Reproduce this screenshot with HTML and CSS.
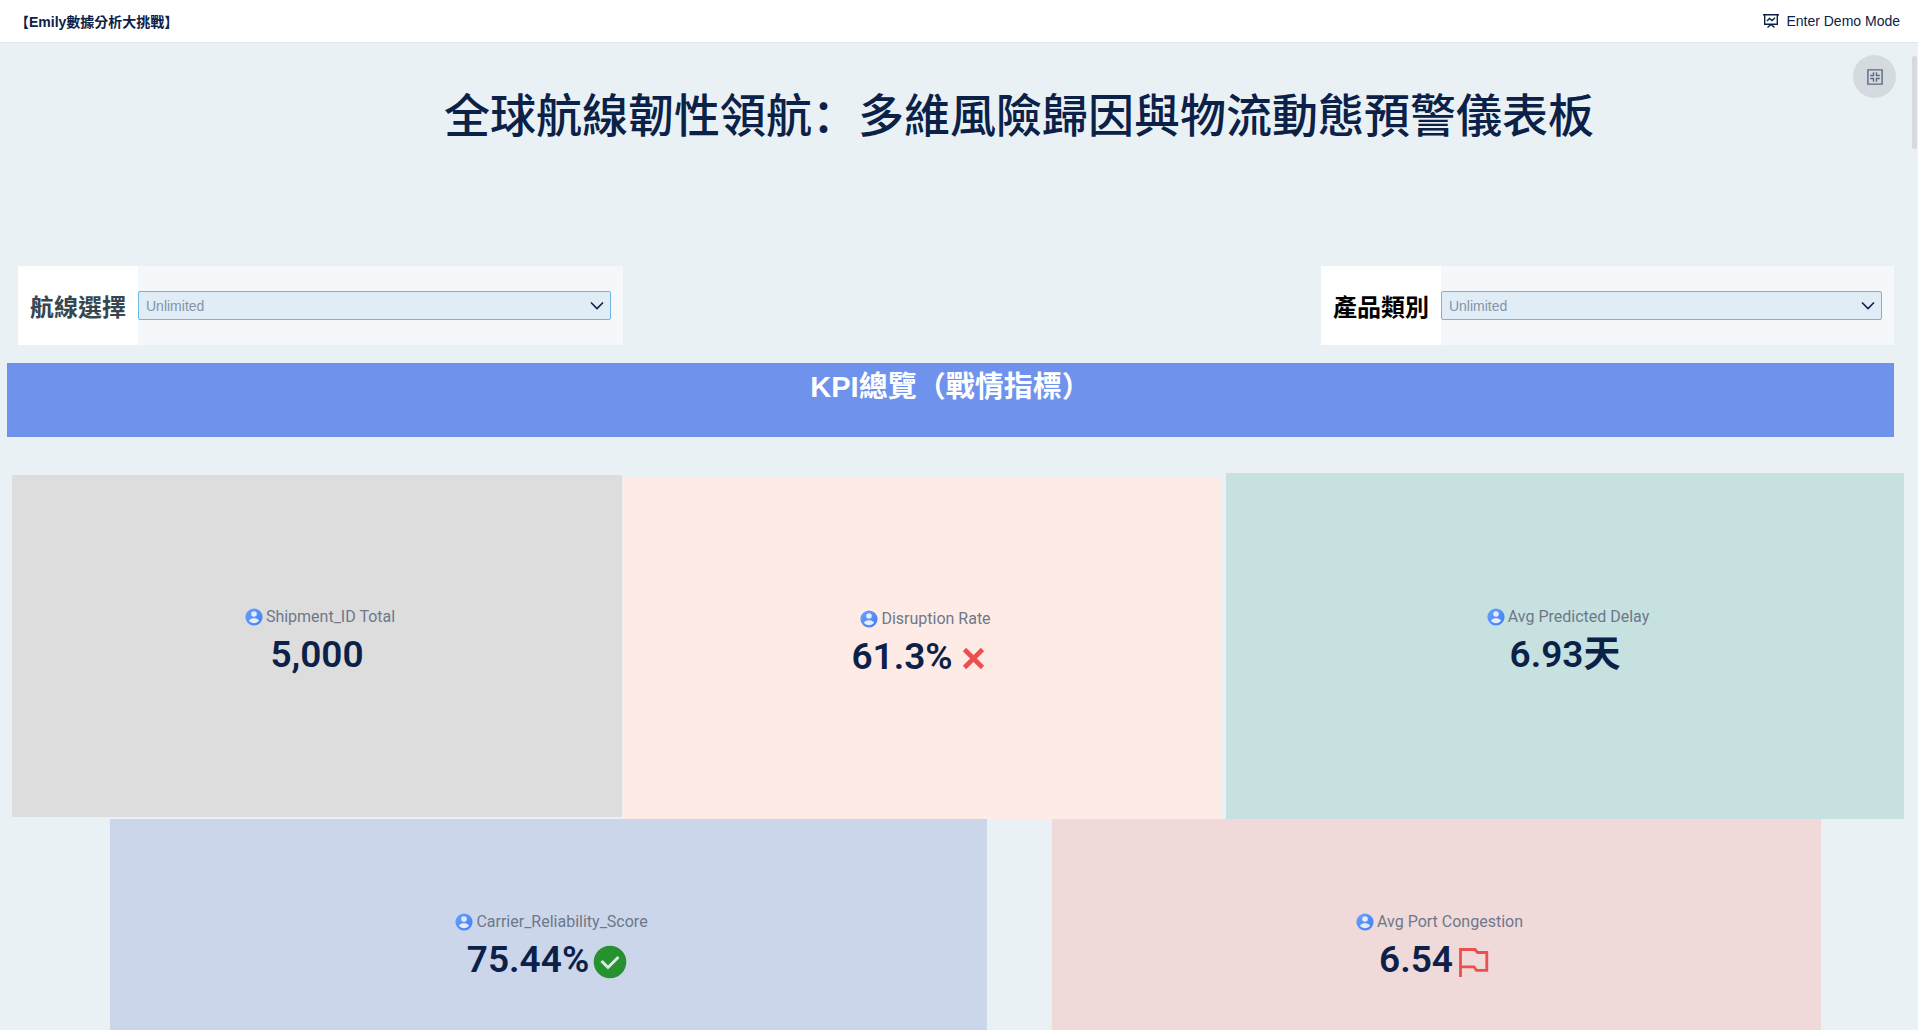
FILE: index.html
```html
<!DOCTYPE html>
<html lang="zh-Hant">

<head>
  <meta charset="utf-8">
  <title>【Emily數據分析大挑戰】</title>
  <link rel="stylesheet" href="styles.css">
</head>

<body>
  <svg class="defs" aria-hidden="true">
    <linearGradient id="userFill" x1="0" y1="0" x2="1" y2="1">
      <stop offset="0" stop-color="#6ba3fb" />
      <stop offset="1" stop-color="#3f7df5" />
    </linearGradient>
    <symbol id="user" viewBox="0 0 18 18">
      <circle cx="9" cy="9" r="8.6" fill="url(#userFill)" />
      <circle cx="9" cy="6" r="2.8" fill="#e4ecf8" />
      <path d="M3.9 12.4C5.2 10.8 7 10.2 9 10.2s3.8.6 5.1 2.2C12.9 14.2 11.1 15.2 9 15.2s-3.9-1-5.1-2.8z" fill="#e4ecf8" />
    </symbol>
    <symbol id="chevron" viewBox="0 0 14 9">
      <path d="M1 1.5l6 6 6-6" fill="none" stroke="#0c2148" stroke-width="1.6" />
    </symbol>
  </svg>

  <header class="topbar">
    <span class="page-name">【Emily數據分析大挑戰】</span>
    <button class="demo-btn">
      <svg width="18" height="16" viewBox="0 0 18 16" fill="none" stroke="#0c2148" stroke-width="1.4">
        <path d="M1 1.7h16M2.7 1.7v9.6h12.6V1.7M5 8l2.5-2.5 2.5 2L13 4.7M5.5 14.5L9 11.5l3.5 3" />
      </svg>
      Enter Demo Mode
    </button>
  </header>

  <main class="board">
    <button class="shrink-btn" aria-label="Exit full screen">
      <svg width="16" height="16" viewBox="0 0 16 16" fill="none" stroke="#5a6886" stroke-width="1.4">
        <path d="M.9.9h14.2v14.2H.9z" />
        <path d="M3.2 6.5h3.3V3.2M12.8 6.5H9.5V3.2M3.2 9.5h3.3v3.3M12.8 9.5H9.5v3.3" />
      </svg>
    </button>
    <div class="scroll-thumb"></div>

    <h1 lang="zh-Hans">全球航線韌性領航：多維風險歸因與物流動態預警儀表板</h1>

    <div class="filters">
      <div class="filter route">
        <label for="route">航線選擇</label>
        <div class="select-wrap">
          <select id="route">
            <option>Unlimited</option>
          </select>
          <svg class="arrow" width="14" height="9"><use href="#chevron" /></svg>
        </div>
      </div>
      <div class="filter product">
        <label for="product">產品類別</label>
        <div class="select-wrap">
          <select id="product">
            <option>Unlimited</option>
          </select>
          <svg class="arrow" width="14" height="9"><use href="#chevron" /></svg>
        </div>
      </div>
    </div>

    <h2>KPI總覽（戰情指標）</h2>

    <div class="kpi-row top">
      <section class="kpi shipment">
        <p class="name"><svg width="18" height="18"><use href="#user" /></svg>Shipment_ID Total</p>
        <p class="value">5,000</p>
      </section>
      <section class="kpi disruption">
        <p class="name"><svg width="18" height="18"><use href="#user" /></svg>Disruption Rate</p>
        <p class="value">61.3%
          <svg width="34" height="34" viewBox="0 0 34 34">
            <path d="M7.5 7.5l18 18M25.5 7.5l-18 18" stroke="#e9504f" stroke-width="4.6" />
          </svg>
        </p>
      </section>
      <section class="kpi delay">
        <p class="name"><svg width="18" height="18"><use href="#user" /></svg>Avg Predicted Delay</p>
        <p class="value">6.93天</p>
      </section>
    </div>

    <div class="kpi-row bottom">
      <section class="kpi carrier">
        <p class="name"><svg width="18" height="18"><use href="#user" /></svg>Carrier_Reliability_Score</p>
        <p class="value">75.44%
          <svg width="34" height="34" viewBox="0 0 34 34">
            <circle cx="17" cy="17" r="16.3" fill="#25912f" />
            <path d="M8.5 16l6.5 6.5L25.5 12" fill="none" stroke="#dde9e8" stroke-width="3" />
          </svg>
        </p>
      </section>
      <section class="kpi port">
        <p class="name"><svg width="18" height="18"><use href="#user" /></svg>Avg Port Congestion</p>
        <p class="value">6.54
          <svg width="34" height="34" viewBox="0 0 34 34">
            <path d="M3.5 32V4.5H18l2.5 3h9.3v17.8H19.500l-2.500-3.500H3.500" fill="none" stroke="#e9504f" stroke-width="2.8" />
          </svg>
        </p>
      </section>
    </div>
  </main>
</body>

</html>
```

FILE: styles.css
```css
* {
  box-sizing: border-box;
}

body {
  margin: 0;
  height: 100vh;
  display: flex;
  flex-direction: column;
  overflow: hidden;
  color: #0c2148;
  background-color: #e9f1f4;
  font-family: "Liberation Sans", "Noto Sans CJK TC", sans-serif;
}

h1,
h2,
p {
  margin: 0;
}

.defs {
  position: absolute;
  width: 0;
  height: 0;
}

/* Top bar */
.topbar {
  flex: none;
  height: 43px;
  padding: 0 18px 0 15px;
  display: flex;
  align-items: center;
  justify-content: space-between;
  background-color: #ffffff;
  border-bottom: 1px solid #e3e8ee;
  font-size: 14px;
}

.page-name {
  font-weight: bold;
}

.demo-btn {
  display: flex;
  align-items: center;
  gap: 6px;
  padding: 0;
  border: none;
  background: none;
  color: inherit;
  font: inherit;
}

/* Dashboard canvas */
.board {
  position: relative;
  flex: 1;
  overflow: hidden;
}

.shrink-btn {
  position: absolute;
  top: 12px;
  right: 22px;
  width: 43px;
  height: 43px;
  display: flex;
  align-items: center;
  justify-content: center;
  padding: 0;
  border: none;
  border-radius: 50%;
  background-color: #d5dade;
}

.scroll-thumb {
  position: absolute;
  top: 13px;
  right: 1px;
  width: 5px;
  height: 93px;
  border-radius: 3px;
  background-color: #d5dade;
}

h1 {
  padding: 35px 0 0 120px;
  font-family: "Noto Sans CJK SC", sans-serif;
  font-size: 46px;
  font-weight: 500;
  line-height: 68px;
  text-align: center;
}

/* Filters */
.filters {
  display: grid;
  grid-template-columns: 605fr 573fr;
  column-gap: 37.2%;
  margin: 120px 24px 0 18px;
}

.filter {
  display: flex;
  height: 79px;
  background-color: #f4f8fb;
}

.filter label {
  flex: none;
  width: 120px;
  display: flex;
  align-items: center;
  justify-content: center;
  background-color: #ffffff;
  font-size: 24px;
  font-weight: bold;
}

.route label {
  color: #36474f;
}

.product label {
  color: #000000;
}

.select-wrap {
  position: relative;
  flex: 1;
  display: flex;
  align-items: center;
  padding-right: 12px;
}

select {
  appearance: none;
  width: 100%;
  height: 29px;
  padding: 0 7px;
  border: 1px solid #6db5e2;
  border-radius: 2px;
  background-color: #e0edf6;
  color: #8593aa;
  font-family: inherit;
  font-size: 14px;
}

.arrow {
  position: absolute;
  right: 19px;
  pointer-events: none;
}

h2 {
  height: 74px;
  margin: 18px 24px 0 7px;
  padding: 3px 0 0;
  background-color: #6f93ed;
  color: #ffffff;
  font-size: 29px;
  line-height: 42px;
  text-align: center;
}

/* KPI cards */
.kpi-row {
  display: flex;
}

.top {
  align-items: flex-start;
  margin: 36px 14px 0 12px;
}

.bottom {
  gap: 65px;
  margin: 0 97px 0 110px;
}

.kpi {
  display: flex;
  flex-direction: column;
  align-items: center;
  justify-content: center;
  height: 342px;
  padding-bottom: 7px;
}

.shipment {
  flex: 610;
  margin-top: 2px;
  background-color: #dddddd;
}

.disruption {
  flex: 599;
  height: 341px;
  margin: 5px 4px 0 1px;
  background-color: #ffebe5;
}

.delay {
  flex: 678;
  height: 346px;
  background-color: #c7e1e0;
}

.carrier {
  flex: 877;
  background-color: #cbd6ea;
}

.port {
  flex: 769;
  background-color: #f0d9d9;
}

.bottom .kpi {
  height: 272px;
  padding-bottom: 14px;
}

.name {
  display: flex;
  align-items: center;
  gap: 3px;
  padding-left: 6px;
  color: #6d788b;
  font-family: Roboto, sans-serif;
  font-size: 16px;
  line-height: 24px;
}

.value {
  display: flex;
  align-items: center;
  gap: 4px;
  font-family: Roboto, "Noto Sans CJK TC", sans-serif;
  font-size: 37px;
  font-weight: 600;
  line-height: 52px;
}

.value svg {
  margin: 3px 3px 0 0;
}
```
